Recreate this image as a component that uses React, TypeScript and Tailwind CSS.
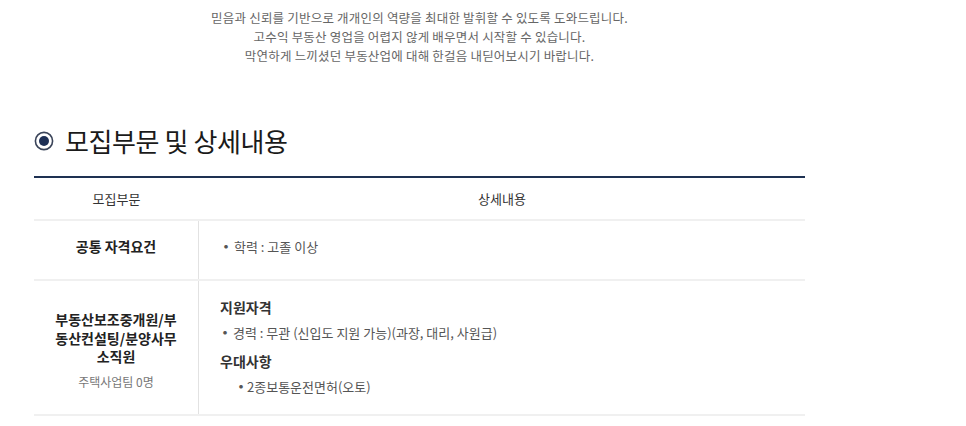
import React from "react";

const intro = [
  "믿음과 신뢰를 기반으로 개개인의 역량을 최대한 발휘할 수 있도록 도와드립니다.",
  "고수익 부동산 영업을 어렵지 않게 배우면서 시작할 수 있습니다.",
  "막연하게 느끼셨던 부동산업에 대해 한걸음 내딛어보시기 바랍니다.",
];

const RadioMark = () => (
  <svg width="20" height="20" viewBox="0 0 20 20" className="shrink-0">
    <circle cx="10" cy="10" r="8.6" fill="#fff" stroke="#3a4459" strokeWidth="1.6" />
    <circle cx="10" cy="10" r="5" fill="#1d2f55" />
  </svg>
);

export default function App() {
  return (
    <div className="h-[426px] w-[966px] overflow-hidden bg-white font-['Noto_Sans_CJK_KR','Noto_Sans',sans-serif]">
      <div className="ml-[34px] w-[771px]">
        <div className="pt-[8px] text-center text-[12.5px] leading-[19px] tracking-[0.2px] text-[#666]">
          {intro.map((line) => (
            <p key={line}>{line}</p>
          ))}
        </div>

        <h2 className="mt-[61px] flex items-center gap-[11px] text-[26px] leading-[30px] text-[#1a1a1a]">
          <RadioMark />
          <span className="tracking-[-0.4px]">모집부문 및 상세내용</span>
        </h2>

        <div className="mt-[20px] border-t-2 border-[#1e3152] text-[13px] text-[#444]">
          {/* header */}
          <div className="grid h-[43px] grid-cols-[165px_1fr] items-center border-b-2 border-[#f0f0f0] text-[#333]">
            <div className="text-center">모집부문</div>
            <div className="text-center">상세내용</div>
          </div>

          {/* 공통 */}
          <div className="grid grid-cols-[165px_1fr] border-b-2 border-[#f0f0f0]">
            <div className="flex h-[58px] items-center justify-center border-r border-[#e2e2e2] pb-[7px] text-[14px] font-bold text-[#222]">
              공통 자격요건
            </div>
            <div className="flex items-center gap-[6px] pb-[7px] pl-[25px] text-[#555]">
              <span className="text-[4px]">●</span>
              <span>학력 : 고졸 이상</span>
            </div>
          </div>

          {/* 부동산 */}
          <div className="grid grid-cols-[165px_1fr] border-b-2 border-[#f0f0f0]">
            <div className="flex h-[133px] flex-col items-center justify-center border-r border-[#e2e2e2] px-[16px] pt-[6px] text-center">
              <p className="text-[14px] font-bold leading-[18.5px] text-[#222]">
                부동산보조중개원/부동산컨설팅/분양사무소직원
              </p>
              <p className="mt-[7px] text-[12px] text-[#777]">주택사업팀 0명</p>
            </div>
            <div className="pl-[21px] pt-[16px] text-[#555]">
              <p className="text-[14px] font-bold leading-[20px] text-[#333]">지원자격</p>
              <p className="mt-[6px] flex items-center gap-[6px] pl-[3px] leading-[20px]">
                <span className="text-[4px]">●</span>
                <span>경력 : 무관 (신입도 지원 가능)(과장, 대리, 사원급)</span>
              </p>
              <p className="mt-[8px] text-[14px] font-bold leading-[20px] text-[#333]">우대사항</p>
              <p className="mt-[6px] flex items-center gap-[4px] pl-[19px] leading-[20px]">
                <span className="text-[4px]">●</span>
                <span>2종보통운전면허(오토)</span>
              </p>
            </div>
          </div>
        </div>
      </div>
    </div>
  );
}
